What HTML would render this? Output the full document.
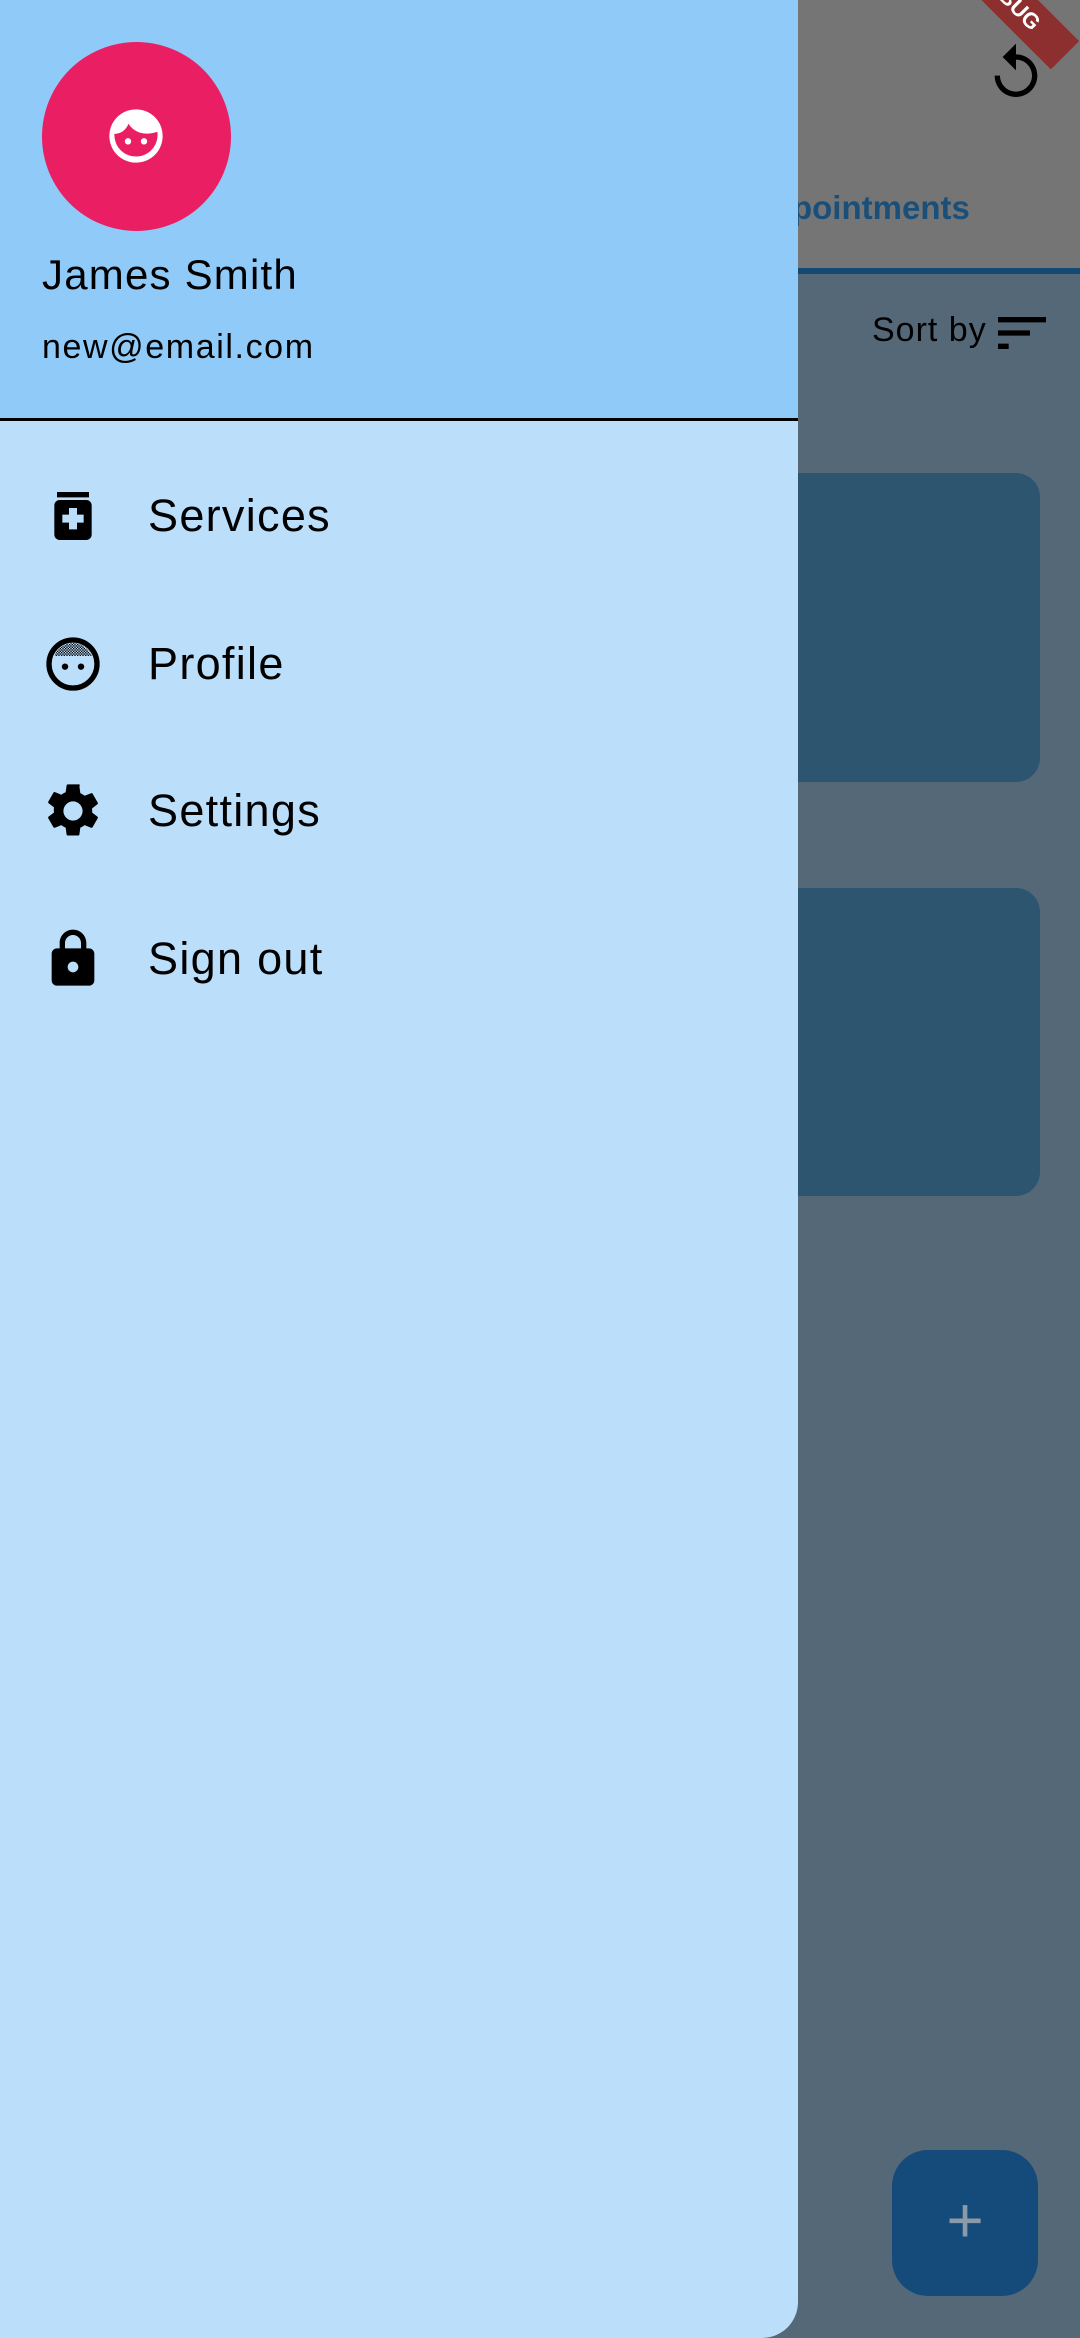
<!DOCTYPE html>
<html><head><meta charset="utf-8"><style>
*{margin:0;padding:0;box-sizing:border-box}
body{width:1080px;height:2338px;position:relative;overflow:hidden;background:#556878;font-family:"Liberation Sans",Roboto,sans-serif}
.abs{position:absolute}
.m{font-size:45px;color:#000;letter-spacing:1.3px}
</style></head><body>
<div class="abs" style="left:0;top:0;width:1080px;height:268px;background:#757575"></div>
<div class="abs" style="left:780px;top:268px;width:300px;height:6px;background:#134a73"></div>
<div class="abs" style="left:748px;top:189px;font-size:33px;font-weight:bold;color:#1a4f7a">Appointments</div>
<svg class="abs" style="left:984px;top:41px" width="64" height="64" viewBox="0 0 24 24"><path d="M12 5V1L7 6l5 5V7c3.31 0 6 2.69 6 6s-2.690 6-6 6-6-2.69-6-6H4c0 4.42 3.58 8 8 8s8-3.58 8-8-3.58-8-8-8z" fill="#000"/></svg>
<div class="abs" style="left:872px;top:311px;font-size:34px;color:#000;letter-spacing:1px">Sort by</div>
<svg class="abs" style="left:990px;top:301px" width="64" height="64" viewBox="0 0 24 24"><path d="M3 18h4v-2H3v2zM3 6v2h18V6H3zm0 7h12v-2H3v2z" fill="#000"/></svg>
<div class="abs" style="left:700px;top:473px;width:340px;height:309px;background:#2e5570;border-radius:24px"></div>
<div class="abs" style="left:700px;top:888px;width:340px;height:308px;background:#2e5570;border-radius:24px"></div>
<div class="abs" style="left:892px;top:2150px;width:146px;height:146px;background:#154b7a;border-radius:36px"></div>
<div class="abs" style="left:892px;top:2185px;width:146px;text-align:center;font-size:64px;line-height:70px;color:#8a9aa8">+</div>
<div class="abs" style="left:966px;top:-72px;width:160px;height:40px;background:#8e2f2f;transform:rotate(45deg);transform-origin:0 0;color:#fff;font-size:22px;font-weight:bold;text-align:center;line-height:40px">DEBUG</div>
<div class="abs" style="left:0;top:0;width:798px;height:2338px;background:#bbdefa;border-radius:0 0 36px 0;overflow:hidden">
 <div class="abs" style="left:0;top:0;width:798px;height:421px;background:#90caf8;border-bottom:3px solid #000"></div>
 <div class="abs" style="left:42px;top:42px;width:189px;height:189px;border-radius:50%;background:#e91e63"></div>
 <svg class="abs" style="left:104px;top:104px" width="64" height="64" viewBox="0 0 24 24"><circle cx="12" cy="12" r="10" fill="#fff"/><path d="M3.9 11.2C6.5 11.2 8.3 9.6 9.2 7.4 10.6 9.7 13 11.1 16 11.1c1.5 0 2.8-.3 4-.7A8.1 8.1 0 1 1 3.9 11.2Z" fill="#e91e63"/><circle cx="9" cy="14" r="1.2" fill="#fff"/><circle cx="15" cy="14" r="1.2" fill="#fff"/></svg>
 <div class="abs" style="left:42px;top:251px;font-size:42px;color:#000;letter-spacing:1.2px">James Smith</div>
 <div class="abs" style="left:42px;top:328px;font-size:34px;color:#000;letter-spacing:1.6px">new@email.com</div>
 <svg class="abs" style="left:41px;top:484px" width="64" height="64" viewBox="0 0 24 24"><path d="M6 3h12v2H6zM17 6H7c-1.1 0-2 .9-2 2v11c0 1.1.9 2 2 2h10c1.1 0 2-.9 2-2V8c0-1.1-.9-2-2-2zm-1 8.5h-2.5V17h-3v-2.5H8v-3h2.5V9h3v2.5H16v3z" fill="#000"/></svg>
 <div class="abs m" style="left:148px;top:490px">Services</div>
 <svg class="abs" style="left:41px;top:632px" width="64" height="64" viewBox="0 0 24 24"><defs><pattern id="p" width="1" height="1" patternUnits="userSpaceOnUse"><rect width=".5" height=".5" fill="#000"/><rect x=".5" y=".5" width=".5" height=".5" fill="#000"/></pattern></defs><circle cx="12" cy="12" r="9" fill="none" stroke="#000" stroke-width="2"/><path d="M5 9a7.5 7.5 0 0 1 14 0z" fill="url(#p)"/><circle cx="9" cy="13" r="1.2"/><circle cx="15" cy="13" r="1.2"/></svg>
 <div class="abs m" style="left:148px;top:638px">Profile</div>
 <svg class="abs" style="left:41px;top:779px" width="64" height="64" viewBox="0 0 24 24"><path d="M19.14 12.94c.04-.3.06-.61.06-.94s-.02-.64-.07-.94l2.03-1.58a.49.49 0 0 0 .12-.61l-1.92-3.32a.49.49 0 0 0-.59-.22l-2.39.96c-.5-.38-1.03-.7-1.62-.94l-.36-2.54A.48.48 0 0 0 13.92 2h-3.84c-.24 0-.43.17-.47.41l-.36 2.54c-.59.24-1.13.57-1.62.94l-2.39-.96a.48.48 0 0 0-.59.22L2.74 8.47c-.12.21-.08.47.12.61l2.03 1.58c-.05.3-.09.63-.09.94s.02.64.07.94l-2.03 1.58a.49.49 0 0 0-.12.61l1.92 3.32c.12.22.37.29.59.22l2.39-.96c.5.38 1.03.7 1.62.94l.36 2.54c.05.24.24.41.48.41h3.84c.24 0 .44-.17.47-.41l.36-2.54c.59-.24 1.13-.56 1.62-.94l2.39.96c.22.08.47 0 .59-.22l1.92-3.32c.12-.22.07-.47-.12-.61l-2.01-1.58zM12 15.6A3.6 3.6 0 1 1 12 8.4a3.6 3.6 0 0 1 0 7.2z" fill="#000"/></svg>
 <div class="abs m" style="left:148px;top:785px">Settings</div>
 <svg class="abs" style="left:41px;top:927px" width="64" height="64" viewBox="0 0 24 24"><path d="M18 8h-1V6c0-2.76-2.24-5-5-5S7 3.24 7 6v2H6c-1.1 0-2 .9-2 2v10c0 1.1.9 2 2 2h12c1.1 0 2-.9 2-2V10c0-1.1-.9-2-2-2zm-6 9c-1.1 0-2-.9-2-2s.9-2 2-2 2 .9 2 2-.9 2-2 2zM9 8V6c0-1.66 1.34-3 3-3s3 1.34 3 3v2H9z" fill="#000"/></svg>
 <div class="abs m" style="left:148px;top:933px">Sign out</div>
</div>
</body></html>
